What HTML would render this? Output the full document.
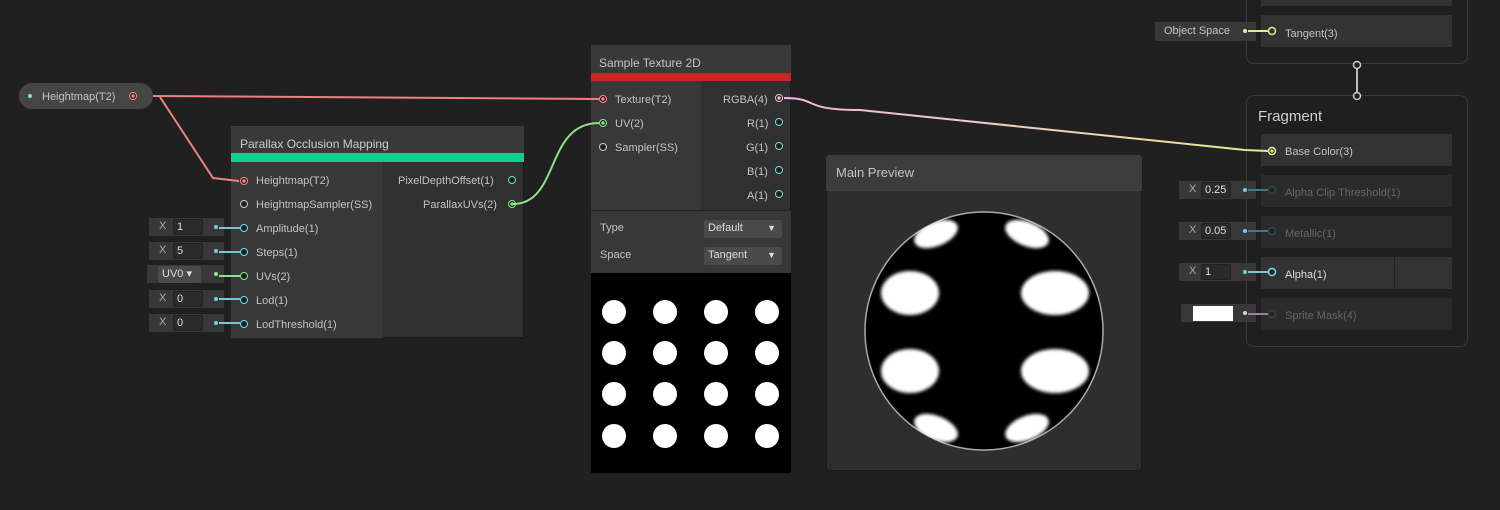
<!DOCTYPE html>
<html><head><style>
*{margin:0;padding:0;box-sizing:border-box}
body{width:1500px;height:510px;background:#202020;position:relative;overflow:hidden;font-family:"Liberation Sans",sans-serif;font-size:11px;color:#c4c4c4}
.a{position:absolute}
.t{position:absolute;white-space:nowrap;line-height:14px}
.port{position:absolute;width:8px;height:8px;border-radius:50%;border:1.5px solid #7dd;background:#202020}
.fld{position:absolute;width:75px;height:18px;background:#383838}
.fld .x{position:absolute;left:10px;top:2px;color:#aaa}
.fld .b{position:absolute;left:24px;top:1px;width:30px;height:16px;background:#2a2a2a;border:1px solid #222;border-radius:2px;color:#ddd;padding-left:3px;line-height:14px}
.fld .d{position:absolute;left:65px;top:7px;width:4px;height:4px;border-radius:50%;background:#7ce}
.dd{position:absolute;background:#4a4a4a;border-radius:2px;color:#ddd;padding-left:4px;line-height:17px;height:17px}
.row{position:absolute;left:1261px;width:191px;height:32px;background:#333}
</style></head><body>

<!-- property pill -->
<div class="a" style="left:19px;top:83px;width:134px;height:26px;border-radius:13px;background:#454545"></div>
<div class="a" style="left:28px;top:94px;width:4px;height:4px;border-radius:50%;background:#8e8"></div>
<div class="t" style="left:42px;top:90px">Heightmap(T2)</div>
<div class="port" style="left:129px;top:92px;border-color:#f88;background:radial-gradient(#f88 35%,#202020 45%)"></div>

<!-- POM node -->
<div class="a" style="left:231px;top:126px;width:293px;height:212px;background:#303030;border:1px solid #1a1a1a"></div>
<div class="a" style="left:231px;top:126px;width:293px;height:28px;background:#393939"></div>
<div class="t" style="left:240px;top:137px;font-size:12px;color:#ccc">Parallax Occlusion Mapping</div>
<div class="a" style="left:231px;top:153px;width:293px;height:9px;background:#0fd08c"></div>
<div class="a" style="left:231px;top:162px;width:152px;height:176px;background:#383838"></div>
<div class="port" style="left:240px;top:177px;border-color:#f88;background:radial-gradient(#f88 35%,#202020 45%)"></div>
<div class="t" style="left:256px;top:174px">Heightmap(T2)</div>
<div class="port" style="left:240px;top:200px;border-color:#ccc"></div>
<div class="t" style="left:256px;top:198px">HeightmapSampler(SS)</div>
<div class="port" style="left:240px;top:224px"></div><div class="t" style="left:256px;top:222px">Amplitude(1)</div>
<div class="port" style="left:240px;top:248px"></div><div class="t" style="left:256px;top:246px">Steps(1)</div>
<div class="port" style="left:240px;top:272px;border-color:#8e8"></div><div class="t" style="left:256px;top:270px">UVs(2)</div>
<div class="port" style="left:240px;top:296px"></div><div class="t" style="left:256px;top:294px">Lod(1)</div>
<div class="port" style="left:240px;top:320px"></div><div class="t" style="left:256px;top:318px">LodThreshold(1)</div>
<div class="t" style="left:398px;top:174px">PixelDepthOffset(1)</div><div class="port" style="left:508px;top:176px"></div>
<div class="t" style="left:423px;top:198px">ParallaxUVs(2)</div><div class="port" style="left:508px;top:200px;border-color:#8e8;background:radial-gradient(#8e8 35%,#202020 45%)"></div>

<div class="fld" style="left:149px;top:218px"><span class="x">X</span><span class="b">1</span><span class="d"></span></div>
<div class="fld" style="left:149px;top:242px"><span class="x">X</span><span class="b">5</span><span class="d"></span></div>
<div class="fld" style="left:147px;top:265px;width:77px"><span class="dd" style="left:11px;top:1px;width:43px">UV0 ▾</span><span class="d" style="left:67px;background:#8e8"></span></div>
<div class="fld" style="left:149px;top:290px"><span class="x">X</span><span class="b">0</span><span class="d"></span></div>
<div class="fld" style="left:149px;top:314px"><span class="x">X</span><span class="b">0</span><span class="d"></span></div>

<!-- Sample Texture -->
<div class="a" style="left:591px;top:45px;width:200px;height:428px;background:#303030;border:1px solid #1a1a1a"></div>
<div class="a" style="left:591px;top:45px;width:200px;height:28px;background:#393939"></div>
<div class="t" style="left:599px;top:56px;font-size:12px">Sample Texture 2D</div>
<div class="a" style="left:591px;top:73px;width:200px;height:8px;background:#c8281f"></div>
<div class="a" style="left:591px;top:81px;width:110px;height:129px;background:#383838"></div>
<div class="a" style="left:591px;top:210px;width:200px;height:1px;background:#222"></div>
<div class="a" style="left:591px;top:211px;width:200px;height:62px;background:#383838"></div>
<div class="port" style="left:599px;top:95px;border-color:#f88;background:radial-gradient(#f88 35%,#202020 45%)"></div><div class="t" style="left:615px;top:93px">Texture(T2)</div>
<div class="port" style="left:599px;top:119px;border-color:#8e8;background:radial-gradient(#8e8 35%,#202020 45%)"></div><div class="t" style="left:615px;top:117px">UV(2)</div>
<div class="port" style="left:599px;top:143px;border-color:#ccc"></div><div class="t" style="left:615px;top:141px">Sampler(SS)</div>
<div class="t" style="left:723px;top:93px">RGBA(4)</div><div class="port" style="left:775px;top:94px;border-color:#f4b6e4;background:radial-gradient(#f4b6e4 35%,#202020 45%)"></div>
<div class="t" style="left:747px;top:117px">R(1)</div><div class="port" style="left:775px;top:118px"></div>
<div class="t" style="left:746px;top:141px">G(1)</div><div class="port" style="left:775px;top:142px"></div>
<div class="t" style="left:747px;top:165px">B(1)</div><div class="port" style="left:775px;top:166px"></div>
<div class="t" style="left:747px;top:189px">A(1)</div><div class="port" style="left:775px;top:190px"></div>
<div class="t" style="left:600px;top:221px">Type</div>
<div class="dd" style="left:704px;top:220px;width:78px;height:18px">Default<span style="position:absolute;right:6px;font-size:9px">▼</span></div>
<div class="t" style="left:600px;top:248px">Space</div>
<div class="dd" style="left:704px;top:247px;width:78px;height:18px">Tangent<span style="position:absolute;right:6px;font-size:9px">▼</span></div>
<svg class="a" style="left:591px;top:273px" width="200" height="200"><rect width="200" height="200" fill="#000"/>
<g fill="#fff"><circle cx="23" cy="39" r="12"/><circle cx="74" cy="39" r="12"/><circle cx="125" cy="39" r="12"/><circle cx="176" cy="39" r="12"/>
<circle cx="23" cy="80" r="12"/><circle cx="74" cy="80" r="12"/><circle cx="125" cy="80" r="12"/><circle cx="176" cy="80" r="12"/>
<circle cx="23" cy="121" r="12"/><circle cx="74" cy="121" r="12"/><circle cx="125" cy="121" r="12"/><circle cx="176" cy="121" r="12"/>
<circle cx="23" cy="163" r="12"/><circle cx="74" cy="163" r="12"/><circle cx="125" cy="163" r="12"/><circle cx="176" cy="163" r="12"/></g></svg>

<!-- Main preview -->
<div class="a" style="left:826px;top:155px;width:316px;height:316px;background:#2e2e2e;border:1px solid #1a1a1a;border-radius:4px"></div>
<div class="a" style="left:826px;top:155px;width:316px;height:36px;background:#3c3c3c;border-radius:4px 4px 0 0"></div>
<div class="t" style="left:836px;top:166px;font-size:13px">Main Preview</div>
<svg class="a" style="left:826px;top:191px" width="316" height="280">
<defs><clipPath id="c"><circle cx="158" cy="140" r="119"/></clipPath><filter id="b"><feGaussianBlur stdDeviation="1.5"/></filter></defs>
<circle cx="158" cy="140" r="119" fill="#000" stroke="#aaa" stroke-width="1.5"/>
<g clip-path="url(#c)" fill="#fff" filter="url(#b)">
<ellipse cx="110" cy="43" rx="23" ry="12" transform="rotate(-22 110 43)"/><ellipse cx="201" cy="43" rx="23" ry="12" transform="rotate(22 201 43)"/>
<ellipse cx="84" cy="102" rx="29" ry="22"/><ellipse cx="229" cy="102" rx="34" ry="22"/>
<ellipse cx="84" cy="180" rx="29" ry="22"/><ellipse cx="229" cy="180" rx="34" ry="22"/>
<ellipse cx="110" cy="237" rx="23" ry="12" transform="rotate(22 110 237)"/><ellipse cx="201" cy="237" rx="23" ry="12" transform="rotate(-22 201 237)"/>
</g></svg>

<!-- Vertex block -->
<div class="a" style="left:1246px;top:-10px;width:222px;height:74px;border:1px solid #3a3a3a;border-radius:8px;background:#1f1f1f"></div>
<div class="row" style="top:-10px;height:16px"></div>
<div class="row" style="top:15px"></div>
<div class="t" style="left:1285px;top:27px">Tangent(3)</div>
<div class="a" style="left:1155px;top:22px;width:101px;height:19px;background:#383838"></div>
<div class="t" style="left:1164px;top:24px">Object Space</div>
<div class="a" style="left:1243px;top:29px;width:4px;height:4px;border-radius:50%;background:#e8e890"></div>

<!-- Fragment -->
<div class="a" style="left:1246px;top:95px;width:222px;height:252px;border:1px solid #3a3a3a;border-radius:8px;background:#1f1f1f"></div>
<div class="t" style="left:1258px;top:108px;font-size:15px;line-height:17px;color:#d0d0d0">Fragment</div>
<div class="row" style="top:134px"></div>
<div class="t" style="left:1285px;top:145px">Base Color(3)</div>
<div class="row" style="top:175px;background:#2b2b2b"></div>
<div class="t" style="left:1285px;top:186px;color:#666">Alpha Clip Threshold(1)</div>
<div class="row" style="top:216px;background:#2b2b2b"></div>
<div class="t" style="left:1285px;top:227px;color:#666">Metallic(1)</div>
<div class="row" style="top:257px"></div>
<div class="a" style="left:1394px;top:257px;width:1px;height:32px;background:#222"></div>
<div class="t" style="left:1285px;top:268px;color:#ddd">Alpha(1)</div>
<div class="row" style="top:298px;background:#2b2b2b"></div>
<div class="t" style="left:1285px;top:309px;color:#666">Sprite Mask(4)</div>
<div class="fld" style="left:1179px;top:181px;width:77px"><span class="x">X</span><span class="b" style="left:22px">0.25</span><span class="d" style="left:64px"></span></div>
<div class="fld" style="left:1179px;top:222px;width:77px"><span class="x">X</span><span class="b" style="left:22px;overflow:hidden">0.05</span><span class="d" style="left:64px"></span></div>
<div class="fld" style="left:1179px;top:263px;width:77px"><span class="x">X</span><span class="b" style="left:22px">1</span><span class="d" style="left:64px"></span></div>
<div class="fld" style="left:1181px;top:304px;width:75px"><span style="position:absolute;left:12px;top:2px;width:40px;height:15px;background:#fff"></span><span class="d" style="left:62px;background:#f4c0e8"></span></div>

<svg class="a" style="left:0;top:0;pointer-events:none" width="1500" height="510">
<defs><linearGradient id="g" x1="0" x2="1"><stop offset="0" stop-color="#f4b6e4"/><stop offset="1" stop-color="#e8e890"/></linearGradient></defs>
<path d="M153 96 L599 99" stroke="#f08080" stroke-width="2" fill="none"/>
<path d="M160 97 L213 178 L239 181" stroke="#f08080" stroke-width="2" fill="none"/>
<path d="M513 204 C560 204 545 123 599 123" stroke="#8ee08a" stroke-width="2" fill="none"/>
<path d="M784 98 C820 98 800 110 860 110 L1245 150 L1268 151" stroke="url(#g)" stroke-width="2" fill="none"/>
<path d="M1248 31 L1268 31" stroke="#e8e890" stroke-width="2"/>
<g stroke-width="2"><path d="M219 228H240M219 252H240M219 299H240M219 323H240M1248 272H1268" stroke="#70c8d8"/><path d="M1248 190H1268M1248 231H1268" stroke="#3e7a84"/><path d="M219 276H240" stroke="#8ee08a"/><path d="M1248 314H1268" stroke="#a080a0"/></g>
<g fill="#202020" stroke-width="1.5">
<circle cx="1272" cy="31" r="3.5" stroke="#e8e890" fill="#333"/>
<circle cx="1272" cy="151" r="3.5" stroke="#e8e890" fill="#333"/><circle cx="1272" cy="151" r="1.6" fill="#e8e890" stroke="none"/>
<circle cx="1272" cy="190" r="3.5" stroke="#2c4a50" fill="#222"/>
<circle cx="1272" cy="231" r="3.5" stroke="#2c4a50" fill="#222"/>
<circle cx="1272" cy="272" r="3.5" stroke="#7dd" fill="#222"/>
<circle cx="1272" cy="314" r="3.5" stroke="#4a3a4a" fill="#222"/>
</g>
<path d="M1357 66V94" stroke="#bbb" stroke-width="2"/>
<circle cx="1357" cy="65" r="3.5" fill="#202020" stroke="#ccc" stroke-width="1.5"/>
<circle cx="1357" cy="96" r="3.5" fill="#202020" stroke="#ccc" stroke-width="1.5"/>
</svg>
</body></html>
